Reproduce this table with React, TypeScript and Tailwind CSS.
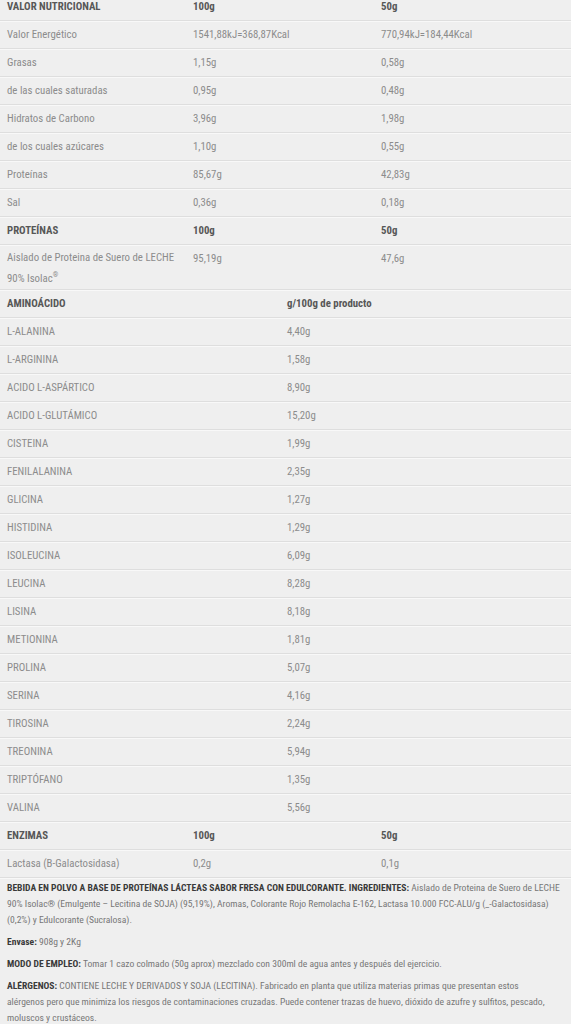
import React from "react";

const font = { fontFamily: '"Roboto Condensed", "Liberation Sans Narrow", "DejaVu Sans Condensed", sans-serif' };

type Row = [string, string, string];

const nutrition: Row[] = [
  ["Valor Energético", "1541,88kJ=368,87Kcal", "770,94kJ=184,44Kcal"],
  ["Grasas", "1,15g", "0,58g"],
  ["de las cuales saturadas", "0,95g", "0,48g"],
  ["Hidratos de Carbono", "3,96g", "1,98g"],
  ["de los cuales azúcares", "1,10g", "0,55g"],
  ["Proteínas", "85,67g", "42,83g"],
  ["Sal", "0,36g", "0,18g"],
];

const aminos: [string, string][] = [
  ["L-ALANINA", "4,40g"],
  ["L-ARGININA", "1,58g"],
  ["ACIDO L-ASPÁRTICO", "8,90g"],
  ["ACIDO L-GLUTÁMICO", "15,20g"],
  ["CISTEINA", "1,99g"],
  ["FENILALANINA", "2,35g"],
  ["GLICINA", "1,27g"],
  ["HISTIDINA", "1,29g"],
  ["ISOLEUCINA", "6,09g"],
  ["LEUCINA", "8,28g"],
  ["LISINA", "8,18g"],
  ["METIONINA", "1,81g"],
  ["PROLINA", "5,07g"],
  ["SERINA", "4,16g"],
  ["TIROSINA", "2,24g"],
  ["TREONINA", "5,94g"],
  ["TRIPTÓFANO", "1,35g"],
  ["VALINA", "5,56g"],
];

const row3 = "grid grid-cols-[186px_188px_1fr] border-b border-[#dedede] shadow-[0_1px_0_#f8f8f8]";
const row2 = "grid grid-cols-[280px_1fr] border-b border-[#dedede] shadow-[0_1px_0_#f8f8f8]";
const cell = "px-[7px] py-[4px] leading-[19px]";
const head = "font-bold text-[#575757]";

const Head3 = ({ cols }: { cols: Row }) => (
  <div className={`${row3} ${head}`}>
    {cols.map((c, i) => (
      <div key={i} className={cell}>{c}</div>
    ))}
  </div>
);

const Body3 = ({ cols }: { cols: Row }) => (
  <div className={`${row3} text-[#8c8c8c]`}>
    {cols.map((c, i) => (
      <div key={i} className={cell}>{c}</div>
    ))}
  </div>
);

const B = ({ children }: { children: React.ReactNode }) => <b className="text-[#3a3a3a]">{children}</b>;

export default function App() {
  return (
    <div className="min-h-[1024px] bg-[#efefef] overflow-hidden" style={font}>
      <div className="-mt-[7px] text-[10.8px]">
        <Head3 cols={["VALOR NUTRICIONAL", "100g", "50g"]} />
        {nutrition.map((r) => (
          <Body3 key={r[0]} cols={r} />
        ))}
        <Head3 cols={["PROTEÍNAS", "100g", "50g"]} />
        <div className={`${row3} text-[#8c8c8c]`}>
          <div className="px-[7px] pt-[2px] leading-[21px]">
            Aislado de Proteina de Suero de LECHE 90% Isolac
            <span className="align-top text-[7px] leading-[14px]">®</span>
          </div>
          <div className={cell}>95,19g</div>
          <div className={cell}>47,6g</div>
        </div>

        <div className={`${row2} ${head}`}>
          <div className={cell}>AMINOÁCIDO</div>
          <div className={cell}>g/100g de producto</div>
        </div>
        {aminos.map(([n, v]) => (
          <div key={n} className={`${row2} text-[#8c8c8c]`}>
            <div className={cell}>{n}</div>
            <div className={cell}>{v}</div>
          </div>
        ))}

        <Head3 cols={["ENZIMAS", "100g", "50g"]} />
        <Body3 cols={["Lactasa (B-Galactosidasa)", "0,2g", "0,1g"]} />
      </div>

      <div className="px-[7px] pt-[2px] text-[9.6px] leading-[16px] text-[#777777] flex flex-col gap-[6px] whitespace-nowrap">
        <p>
          <B>BEBIDA EN POLVO A BASE DE PROTEÍNAS LÁCTEAS SABOR FRESA CON EDULCORANTE. INGREDIENTES:</B> Aislado de
          Proteina de Suero de LECHE
          <br />
          90% Isolac® (Emulgente – Lecitina de SOJA) (95,19%), Aromas, Colorante Rojo Remolacha E-162, Lactasa 10.000
          FCC-ALU/g (_-Galactosidasa)
          <br />
          (0,2%) y Edulcorante (Sucralosa).
        </p>
        <p>
          <B>Envase:</B> 908g y 2Kg
        </p>
        <p>
          <B>MODO DE EMPLEO:</B> Tomar 1 cazo colmado (50g aprox) mezclado con 300ml de agua antes y después del
          ejercicio.
        </p>
        <p>
          <B>ALÉRGENOS:</B> CONTIENE LECHE Y DERIVADOS Y SOJA (LECITINA). Fabricado en planta que utiliza materias
          primas que presentan estos
          <br />
          alérgenos pero que minimiza los riesgos de contaminaciones cruzadas. Puede contener trazas de huevo, dióxido de
          azufre y sulfitos, pescado,
          <br />
          moluscos y crustáceos.
        </p>
      </div>
    </div>
  );
}
